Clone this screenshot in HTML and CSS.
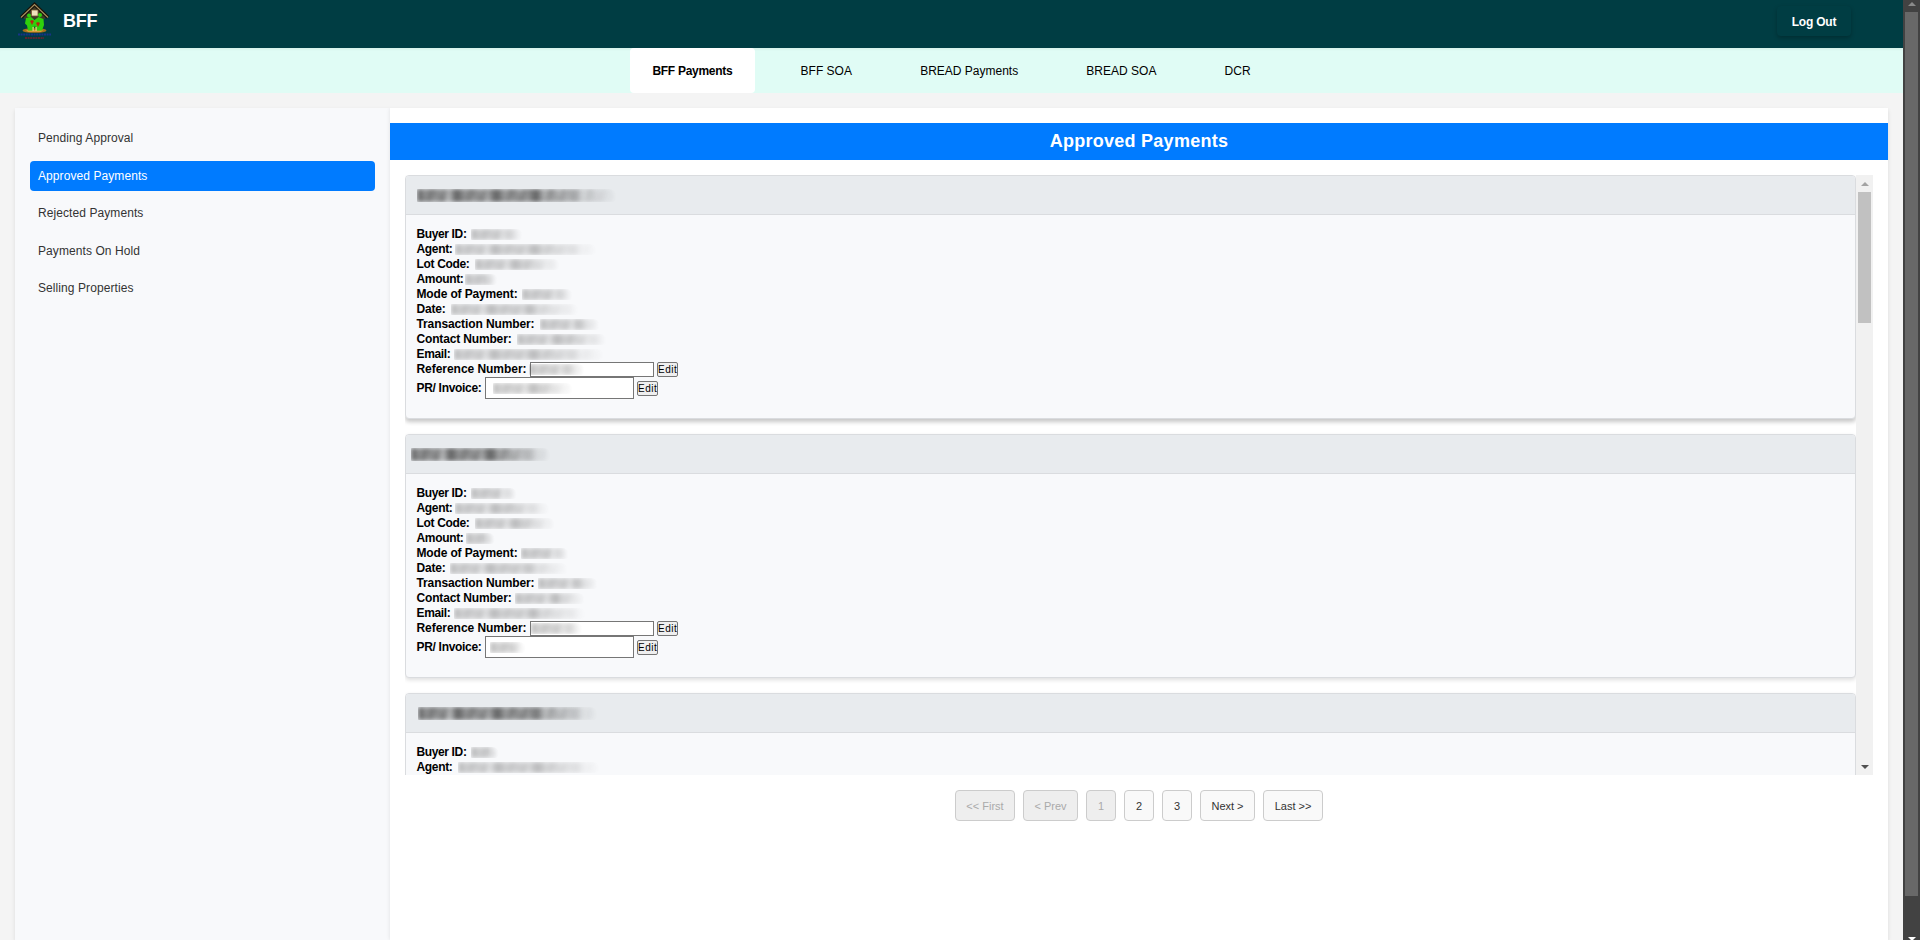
FILE: index.html
```html
<!DOCTYPE html>
<html lang="en">
<head>
<meta charset="utf-8">
<title>BFF - Approved Payments</title>
<link rel="stylesheet" href="styles.css">
</head>
<body>
<div class="page">
  <header class="topbar">
    <svg class="logo" viewBox="0 0 38 38" width="38" height="38">
      <ellipse cx="18.500" cy="28.500" rx="12" ry="2.300" fill="#a8701c"/>
      <path d="M10 28h17l-2 2H12z" fill="#d89a35"/>
      <path d="M18.500 4 29 13v4H8v-4z" fill="#3c3a26"/>
      <path d="M5 15.500 18.500 2.500 32 15.500" fill="none" stroke="#171008" stroke-width="3.500"/>
      <path d="M5 15.500 18.500 2.500 32 15.500" fill="none" stroke="#a5905f" stroke-width="1.200"/>
      <path d="M15.500 8h6.500v6h-6.500z" fill="#efe3bd" stroke="#77592e" stroke-width=".8"/>
      <circle cx="13" cy="13.500" r="2" fill="#2fd00b"/><circle cx="24" cy="13" r="2" fill="#2fd00b"/>
      <path d="M10 16l5-1 3.500 3 4-3 5 2 .500 6-2 5.500h-6l-1-5-2 5h-5l-1-5-2-2z" fill="#2fd00b"/>
      <path d="M14 19l2-1 2 1-2 4zM20 21l2-1 2 1-2 4z" fill="#b32a12"/>
      <path d="M16.500 25h1.200v4h-1.200zM19.500 25h1.200v4h-1.200z" fill="#f0cf83"/>
      <path d="M2 32.500h33" stroke="#1f309e" stroke-width="2" stroke-dasharray="2 .6" opacity=".75"/>
      <path d="M9 36h19" stroke="#9c1624" stroke-width="1.500" stroke-dasharray="2 .6" opacity=".8"/>
    </svg>
    <h1 class="brand">BFF</h1>
    <button class="logout">Log Out</button>
  </header>
  <nav class="tabs">
    <a class="tab active">BFF Payments</a><a class="tab">BFF SOA</a><a class="tab">BREAD Payments</a><a class="tab">BREAD SOA</a><a class="tab">DCR</a>
  </nav>
  <div class="container">
    <aside class="sidebar">
      <a class="side">Pending Approval</a>
      <a class="side active">Approved Payments</a>
      <a class="side">Rejected Payments</a>
      <a class="side">Payments On Hold</a>
      <a class="side">Selling Properties</a>
    </aside>
    <main class="content">
      <h2 class="title">Approved Payments</h2>
      <div class="scroller">
        <div class="list" id="list"></div>
        <div class="bar"><i class="up"></i><div class="thumb"></div><i class="down"></i></div>
      </div>
      <div class="pager">
        <button class="pg wide off">&lt;&lt; First</button><button class="pg mid off">&lt; Prev</button><button class="pg off">1</button><button class="pg">2</button><button class="pg">3</button><button class="pg mid">Next &gt;</button><button class="pg wide">Last &gt;&gt;</button>
      </div>
    </main>
  </div>
</div>
<div class="winbar"><i class="up"></i><div class="thumb"></div><i class="down"></i></div>
<script src="app.js"></script>
</body>
</html>
```
FILE: styles.css
```css
* { box-sizing: border-box; }
body { margin: 0; height: 940px; overflow: hidden; display: flex; background: #f4f4f4; font: 12px/15px "Liberation Sans", Arial, sans-serif; color: #000; }
button { font-family: inherit; margin: 0; padding: 0; }
h1, h2, h3 { margin: 0; }
.page { flex: 1; min-width: 0; height: 940px; display: flex; flex-direction: column; }

.topbar { flex: none; height: 48px; background: #003d43; display: flex; align-items: flex-start; padding-left: 16px; padding-right: 52px; }
.logo { margin-top: 2px; display: block; }
.brand { margin: 11px auto 0 9px; font-size: 18px; line-height: 21px; color: #fff; letter-spacing: -.2px; }
.logout { margin-top: 6px; padding-top: 1px; width: 74px; height: 30px; border: 0; border-radius: 4px; background: #003d43; color: #fff; font-size: 12px; font-weight: bold; letter-spacing: -.2px; box-shadow: 0 2px 4px rgba(0,0,0,.25); }

.tabs { flex: none; height: 45px; background: #e0fcf5; display: flex; justify-content: center; gap: 23.200px; box-shadow: inset 0 3px 3px -2px rgba(0,0,0,.06); }
.tab { padding: 1px 22.500px 0; height: 45px; line-height: 45px; border-radius: 4px; white-space: nowrap; }
.tab.active { background: #fff; font-weight: bold; letter-spacing: -.28px; }

.container { flex: 1; margin: 15px 15px 0; display: flex; background: #fff; box-shadow: 0 2px 4px rgba(0,0,0,.1); }
.sidebar { width: 375px; flex: none; background: #f8f9fb; padding: 15px; display: flex; flex-direction: column; gap: 7.500px; }
.side { height: 30px; line-height: 30px; padding-left: 8px; border-radius: 4px; color: #333; letter-spacing: .08px; }
.side.active { background: #007bff; color: #fff; }
.content { flex: 1; min-width: 0; padding-top: 15px; background: #fff; box-shadow: 0 0 4px rgba(0,0,0,.1); clip-path: inset(0 0 0 -6px); }
.title { height: 37px; line-height: 37px; background: #007bff; color: #fff; text-align: center; font-size: 18px; letter-spacing: .25px; }

.scroller { margin: 15px 15px 0; height: 600px; display: flex; overflow: hidden; }
.list { flex: 1; height: 600px; overflow: hidden; display: flex; flex-direction: column; gap: 15px; }
.card { flex: none; height: 244px; border: 1px solid #dadcdf; border-radius: 4px; background: #f8f9fb; box-shadow: 0 2px 4px rgba(0,0,0,.13); }
.card:first-child { box-shadow: 0 3px 4px rgba(0,0,0,.22); }
.head { height: 39px; background: #e8ebee; border-bottom: 1px solid #dadcdf; border-radius: 3px 3px 0 0; position: relative; }
.fields { padding: 12px 10.500px 0; font-weight: bold; }
.row { height: 15px; display: flex; align-items: center; position: relative; white-space: nowrap; }
.row.pr { height: 22px; }
.field { border: 1px solid #767676; background: #fff; width: 124px; height: 15px; margin-right: 3px; flex: none; }
.pr .field { width: 149px; height: 22px; }
.edit { width: 21px; height: 15px; font-size: 10px; line-height: 13px; border: 1px solid #767676; border-radius: 2px; background: #efefef; letter-spacing: .5px; overflow: hidden; }
.pr .edit { margin-top: 1px; }
/* hidden customer values, smeared toward the right */
.smudge { position: absolute; height: 11px; border-radius: 5px 60px 40px 6px; filter: blur(2px); opacity: .36;
  background:
    repeating-linear-gradient(100deg, #4448 0 3px, transparent 5px 11px, #4448 13px),
    repeating-linear-gradient(78deg, #3336 0 6px, transparent 9px 16px, #3336 19px),
    repeating-linear-gradient(90deg, #2225 0 12px, transparent 20px 31px, #2225 37px),
    #8889;
  mask-image: linear-gradient(90deg, #000 60%, transparent); }
.head .smudge { height: 13px; opacity: .85; }

.pager { display: flex; justify-content: center; gap: 8px; margin-top: 15px; }
.pg { width: 30px; height: 31px; border: 1px solid #ccc; border-radius: 4px; background: #f9f9f9; color: #333; font-size: 11px; }
.pg.mid { width: 55px; }
.pg.wide { width: 60px; }
.pg.off { background: #eee; color: #aaa; }

.bar, .winbar { flex: none; width: 17px; display: flex; flex-direction: column; align-items: center; background: #f1f1f1; }
.winbar { background: #424242; height: 940px; }
.thumb { width: 13px; background: #c1c1c1; height: 131px; flex: none; }
.winbar .thumb { background: #686868; height: 884px; }
.up, .down { display: block; width: 0; height: 0; border: 4px solid transparent; flex: none; }
.up { border-top: 0; border-bottom-color: #a3a3a3; margin: 7px 0 6px; }
.down { border-bottom: 0; border-top-color: #505050; margin: auto 0 6px; }
.winbar .up { margin: 2px 0 6px; border-bottom-color: #8a8a8a; }
.winbar .down { margin-bottom: -1px; border-top-color: #fff; }
```
FILE: app.js
```js
// Label, text width in px
const labels = [
  ['Buyer ID:', 50], ['Agent:', 36], ['Lot Code:', 53], ['Amount:', 47],
  ['Mode of Payment:', 101], ['Date:', 29], ['Transaction Number:', 118],
  ['Contact Number:', 95], ['Email:', 34], ['Reference Number:', 110], ['PR/ Invoice:', 65]
];
// Hidden value extents per card: [left, width], heading first
const cards = [
  [[11, 200], [54, 52], [38, 142], [58, 85], [48, 33], [105, 51], [34, 128], [123, 60], [100, 90], [37, 150], [112, 56], [76, 80]],
  [[5, 140], [54, 46], [38, 95], [58, 80], [49, 29], [104, 48], [33, 118], [121, 60], [98, 70], [37, 132], [114, 52], [73, 36]],
  [[12, 180], [54, 28], [41, 142]]
];
const smudge = (s, top) => s ? `<span class="smudge" style="left:${s[0]}px;width:${s[1]}px;top:${top}px"></span>` : '';
const list = document.getElementById('list');
cards.forEach(values => {
  const rows = labels.slice(0, values.length - 1).map(([text, w], i) => {
    const input = i > 8;
    const pr = i === 10;
    return `<div class="row${pr ? ' pr' : ''}"><span class="label" style="width:${w + (input ? 3.5 : 0)}px" data-w="${w}">${text}</span>` +
      (input ? '<span class="field"></span><button class="edit">Edit</button>' : '') +
      smudge(values[i + 1], pr ? 6 : 2) + '</div>';
  }).join('');
  list.insertAdjacentHTML('beforeend', `<section class="card"><div class="head">${smudge(values[0], 13)}</div><div class="fields">${rows}</div></section>`);
});
// Fit every label to its column width
document.querySelectorAll('.label').forEach(el => {
  const range = document.createRange();
  range.selectNodeContents(el);
  const diff = el.dataset.w - range.getBoundingClientRect().width;
  el.style.letterSpacing = diff / el.textContent.length + 'px';
});
```
